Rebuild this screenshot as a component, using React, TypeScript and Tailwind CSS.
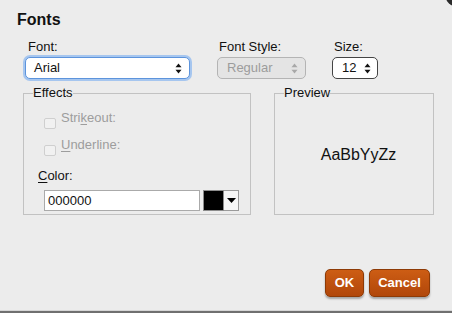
import type { ReactNode } from "react";

function Arrows({ color = "#111" }: { color?: string }) {
  return (
    <svg width="7" height="11" viewBox="0 0 7 11" className="shrink-0">
      <path d="M0.5 4.2 L3.5 0.5 L6.5 4.2 Z" fill={color} />
      <path d="M0.5 6.8 L3.5 10.5 L6.5 6.8 Z" fill={color} />
    </svg>
  );
}

function Label({ children, className = "" }: { children: ReactNode; className?: string }) {
  return <div className={`h-[16px] text-[13px] leading-[16px] ${className}`}>{children}</div>;
}

function Checkbox() {
  return (
    <div className="mt-[8px] h-[11px] w-[12px] shrink-0 rounded-[2px] border border-[#cfcfcf] bg-[#f1f1f1]" />
  );
}

export default function App() {
  return (
    <div
      className="relative flex h-[313px] w-[452px] flex-col overflow-hidden bg-[#ececec] text-[#111]"
      style={{ fontFamily: '"Liberation Sans", Arial, sans-serif' }}
    >
      <div className="absolute -right-[19px] -top-[19px] h-[26px] w-[26px] rounded-full bg-[#2b2b2b]" />

      <h1 className="ml-[17px] mt-[10px] h-[20px] text-[16px] font-bold leading-[20px]">Fonts</h1>

      {/* selects */}
      <div className="mt-[9px] flex pl-[25px]">
        <div className="flex w-[165px] flex-col">
          <Label className="ml-[3px]">Font:</Label>
          <div className="mt-[2px] flex h-[22px] items-center justify-between rounded-[5px] border border-[#5d94dc] bg-white pl-[8px] pr-[7px] text-[13px] shadow-[0_0_0_2px_#a6c6ef]">
            <span>Arial</span>
            <Arrows />
          </div>
        </div>
        <div className="ml-[27px] flex w-[89px] flex-col">
          <Label className="ml-[2px]">Font Style:</Label>
          <div className="mt-[2px] flex h-[22px] items-center justify-between rounded-[5px] border border-[#b4b4b4] bg-[#e4e4e4] pl-[9px] pr-[7px] text-[13px] text-[#9c9c9c]">
            <span>Regular</span>
            <Arrows color="#a8a8a8" />
          </div>
        </div>
        <div className="ml-[26px] flex w-[46px] flex-col">
          <Label className="ml-[2px]">Size:</Label>
          <div className="mt-[2px] flex h-[22px] items-center justify-between rounded-[5px] border border-[#444] bg-white pl-[9px] pr-[6px] text-[13px]">
            <span>12</span>
            <Arrows />
          </div>
        </div>
      </div>

      {/* groups */}
      <div className="mt-[6px] flex pl-[23px]">
        <fieldset className="flex h-[130px] w-[228px] flex-col border border-[#c2c2c2] px-0 pb-[8px]">
          <legend className="ml-[9px] px-0 text-[13px] leading-[16px]">Effects</legend>
          <div className="mt-[9px] flex gap-[5px] pl-[20px] text-[#9d9d9d]">
            <Checkbox />
            <Label>
              Stri<span className="underline underline-offset-2">k</span>eout:
            </Label>
          </div>
          <div className="mt-[8px] flex gap-[5px] pl-[20px] text-[#9d9d9d]">
            <Checkbox />
            <Label>
              <span className="underline underline-offset-2">U</span>nderline:
            </Label>
          </div>
          <Label className="ml-[14px] mt-[12px]">
            <span className="underline underline-offset-2">C</span>olor:
          </Label>
          <div className="mt-[6px] flex pl-[20px]">
            <div className="flex h-[21px] w-[156px] items-center border border-[#aaa] bg-white pl-[3px] text-[13px]">
              000000
            </div>
            <div className="ml-[3px] h-[21px] w-[21px] border border-[#8c8c8c] bg-black" />
            <div className="flex h-[21px] w-[15px] items-center justify-center border border-l-0 border-[#9a9a9a] bg-[#f6f6f6]">
              <svg width="9" height="5" viewBox="0 0 9 5">
                <path d="M0 0 L9 0 L4.5 5 Z" fill="#000" />
              </svg>
            </div>
          </div>
        </fieldset>

        <fieldset className="ml-[23px] flex h-[130px] w-[160px] items-center justify-center border border-[#c2c2c2] px-0">
          <legend className="ml-[9px] px-0 text-[13px] leading-[16px]">Preview</legend>
          <div className="flex flex-1 items-center justify-center pb-[6px] pl-[9px] text-[16px]">AaBbYyZz</div>
        </fieldset>
      </div>

      {/* buttons */}
      <div className="mt-[54px] flex justify-end gap-[5px] pr-[22px]">
        <button className="h-[28px] w-[39px] rounded-[5px] border border-[#8d3a06] bg-gradient-to-b from-[#cd5d14] to-[#b1470a] text-[13px] font-bold text-white shadow-[0_2px_2px_rgba(0,0,0,0.3)]">
          OK
        </button>
        <button className="h-[28px] w-[61px] rounded-[5px] border border-[#8d3a06] bg-gradient-to-b from-[#cd5d14] to-[#b1470a] text-[13px] font-bold text-white shadow-[0_2px_2px_rgba(0,0,0,0.3)]">
          Cancel
        </button>
      </div>

      <div className="mt-auto h-[1px] bg-[#d6d6d6]" />
      <div className="h-[2px] bg-[#707070]" />
    </div>
  );
}
